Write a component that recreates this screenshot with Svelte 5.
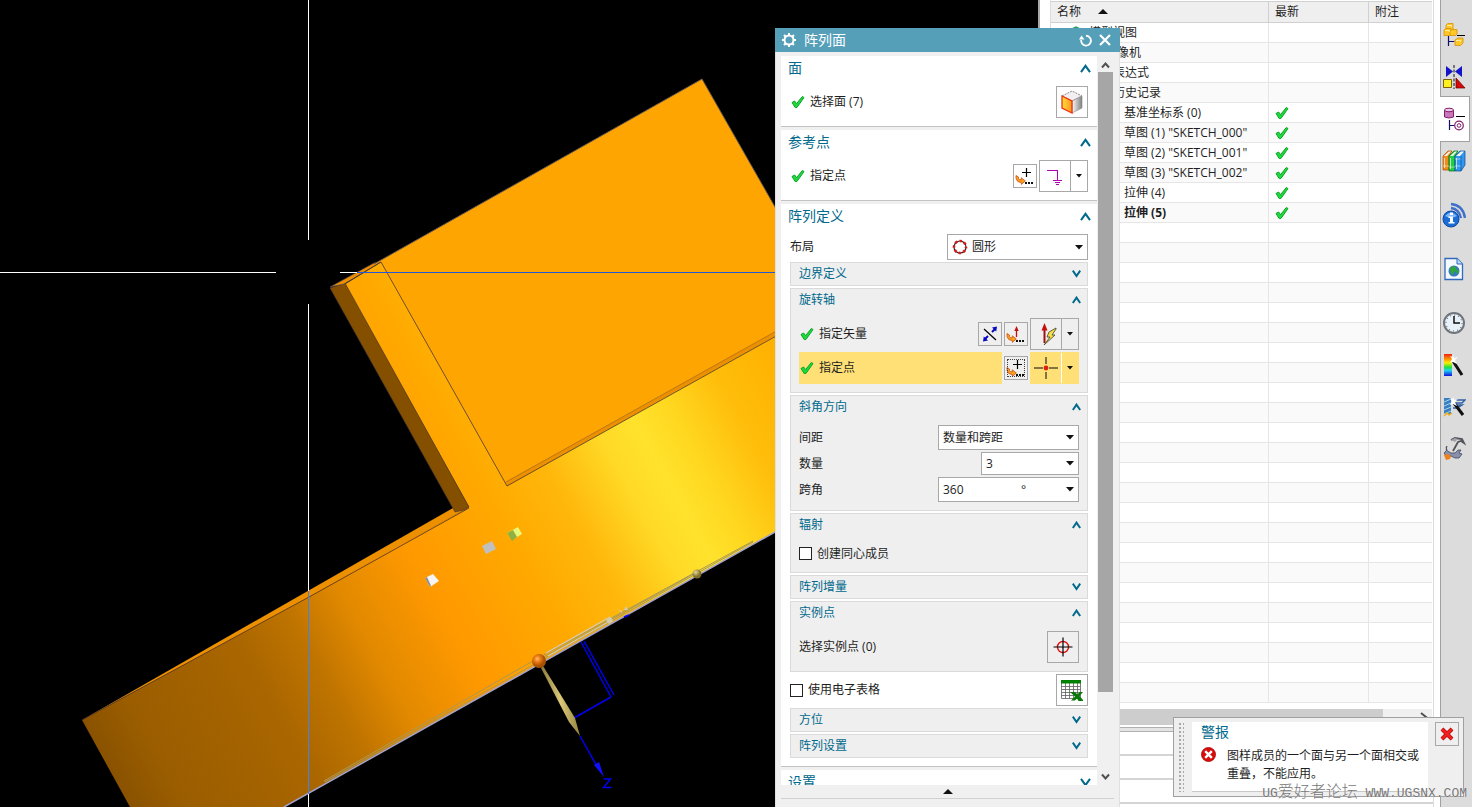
<script>
    const features = [
        { name: '模型视图', indent: 1, views: true },
        { name: '摄像机', indent: 2 },
        { name: '用户表达式', indent: 1 },
        { name: '模型历史记录', indent: 1 },
        { name: '基准坐标系 (0)', indent: 3, ok: true },
        { name: '草图 (1) "SKETCH_000"', indent: 3, ok: true },
        { name: '草图 (2) "SKETCH_001"', indent: 3, ok: true },
        { name: '草图 (3) "SKETCH_002"', indent: 3, ok: true },
        { name: '拉伸 (4)', indent: 3, ok: true },
        { name: '拉伸 (5)', indent: 3, ok: true, active: true }
    ];
    const blankRows = Array.from({ length: 24 });

    let layout = $state('圆形');
    let spacing = $state('数量和跨距');
    let count = $state('3');
    let span = $state('360');
    let concentric = $state(false);
    let spreadsheet = $state(false);
    let alertOpen = $state(true);
</script>

{#snippet chevron(open)}
    <svg class="chevron" width="11" height="9" viewBox="0 0 11 9" fill="none" stroke="currentColor" stroke-width="2">
        <path d={open ? 'M1 8.2 5.5 1.8 10 8.2' : 'M1 .8 5.5 7.2 10 .8'} />
    </svg>
{/snippet}

{#snippet chevronSmall(open)}
    <svg class="chevron" width="9" height="8" viewBox="0 0 9 8" fill="none" stroke="currentColor" stroke-width="2">
        <path d={open ? 'M.8 7 4.5 1.6 8.2 7' : 'M.8 .6 4.5 6 8.2 .6'} />
    </svg>
{/snippet}

{#snippet tick()}
    <svg class="tick" width="14" height="14" viewBox="0 0 14 14">
        <path d="M1 7.5 3.6 6 5.6 8.6 11.4 1.4 13 2.6 6 12.4 4.2 12.6Z" fill="#1fd83e" stroke="#0da428" stroke-width="1" stroke-linejoin="round" />
    </svg>
{/snippet}

{#snippet caret()}
    <svg class="caret" width="8" height="5" viewBox="0 0 8 5"><path d="M0 0h8L4 4.5Z" fill="#111" /></svg>
{/snippet}

{#snippet caretSmall()}
    <svg width="6" height="4" viewBox="0 0 6 4"><path d="M0 0h6L3 3.5Z" fill="#111" /></svg>
{/snippet}

{#snippet swoosh()}
    <path d="M2 10.500 4.500 12v1.600q.8 1.400 2.800 1.200v-2l4 3.200-4 3.400v-1.800Q3 17.500 2 13.500Z" fill="#f9a11b" stroke="#c8501e" stroke-width=".8" />
    <path d="M11 17h2v2h-2zM14 17h2v2h-2zM17 17h2v2h-2z" fill="#111" />
{/snippet}

{#snippet pointDialog()}
    <svg width="22" height="22" viewBox="0 0 22 22">
        {@render swoosh()}
        <path d="M12.500 3v9M8 7.500h9" stroke="#000" stroke-width="1.200" />
    </svg>
{/snippet}

<div class="app">
    <main class="viewport">
        <svg viewBox="0 0 1039 807" preserveAspectRatio="xMinYMin slice" role="img" aria-label="三维模型">
            <defs>
                <linearGradient id="shade" gradientUnits="userSpaceOnUse" x1="82" y1="720" x2="782" y2="332">
                    <stop offset="0" stop-color="#8a5200" />
                    <stop offset=".06" stop-color="#9a5d00" />
                    <stop offset=".22" stop-color="#aa6600" />
                    <stop offset=".29" stop-color="#bf7400" />
                    <stop offset=".36" stop-color="#e28900" />
                    <stop offset=".46" stop-color="#ff9900" />
                    <stop offset=".58" stop-color="#ffa900" />
                    <stop offset=".66" stop-color="#ffb70b" />
                    <stop offset=".74" stop-color="#ffda26" />
                    <stop offset=".785" stop-color="#ffe22c" />
                    <stop offset=".83" stop-color="#ffd820" />
                    <stop offset=".9" stop-color="#ffbe0b" />
                    <stop offset="1" stop-color="#ffae00" />
                </linearGradient>
                <radialGradient id="ball" cx=".38" cy=".35">
                    <stop offset="0" stop-color="#ffc070" />
                    <stop offset=".4" stop-color="#f08018" />
                    <stop offset="1" stop-color="#a85000" />
                </radialGradient>
                <radialGradient id="ballSmall" cx=".35" cy=".3">
                    <stop offset="0" stop-color="#e8d890" />
                    <stop offset="1" stop-color="#80702c" />
                </radialGradient>
                <linearGradient id="needle">
                    <stop offset="0" stop-color="#8a7a3a" />
                    <stop offset=".5" stop-color="#dcc878" />
                    <stop offset="1" stop-color="#94843e" />
                </linearGradient>
            </defs>

            <!-- plate -->
            <path d="M82 720 469 507 345 284 381 262 600 260 900 256V462L284 807H130Z" fill="url(#shade)" />
            <path d="M82 720 453 508 469 507 309 597Z" fill="#ec9000" />
            <path d="M82 720 309 597 469 508" fill="none" stroke="#4a3030" stroke-width=".8" />
            <path d="M330 288 345 283 469 507 464 510 455 512Z" fill="#845000" stroke="#4a3838" stroke-width=".6" />
            <path d="M330 287 374 263 381 262 344 284Z" fill="#ec9000" stroke="#504050" stroke-width=".7" />
            <!-- raised block -->
            <path d="M374 264 702 79 900 426V262L505 482 381 262Z" fill="#ffa502" />
            <path d="M374 264 702 79 900 426" fill="none" stroke="#6a584c" />
            <path d="M505 482 900 262V266L507 486Z" fill="#ec9000" />
            <path d="M345 284 381 262 507 486 900 267" fill="none" stroke="#4a3636" stroke-width=".8" />
            <path d="M506 482 900 262" stroke="#a86c20" stroke-width=".7" />

            <!-- selected edge -->
            <path d="M284 807 900 462" stroke="#a2a2cc" stroke-width="1.500" />
            <path d="M324 781 538 658 753 541M325 782 540 661 753 542M540 659 697 572" stroke="#a89a58" stroke-width="1" fill="none" />
            <path d="M546 653 610 617M548 656 610 621" stroke="#d6ccb0" stroke-width="1.200" />
            <path d="M606 620l5-3 2 4-4 3ZM618 609l4 2 0 2ZM626 606l2 4-4 0Z" fill="#d0cdb4" />
            <path d="M624 617l5-2" stroke="#00f" stroke-width="1.500" />

            <!-- handles -->
            <path d="M425 578 433 574 439 581 430 587Z" fill="#f4f4f4" />
            <path d="M425 578 427 577 431 586 430 587Z" fill="#8c8c8c" />
            <path d="M482 546 492 541 496 549 486 554Z" fill="#c0c0c0" />
            <path d="M507 533 518 527 522 534 512 540Z" fill="#e8f878" />
            <path d="M507 533 513 530 517 537 512 541Z" fill="#90b040" />

            <!-- datum axes -->
            <g fill="none" stroke="#0000f0" stroke-width="1.500">
                <path d="M581 642 611 697M584 641 614 695M611 697 574 718M580 736 598 768" />
                <path d="M603.500 779h7l-7 8.500h8" />
            </g>
            <path d="M594 765 599 762 604 777Z" fill="#1010ff" />
            <path d="M541 668 543 666 575 718 580 736 569 722Z" fill="url(#needle)" />
            <circle cx="539" cy="661" r="7" fill="url(#ball)" />
            <circle cx="697" cy="574" r="4.500" fill="url(#ballSmall)" />

            <!-- crosshair -->
            <g shape-rendering="crispEdges">
                <path d="M308 0h1v240h-1zM308 304h1v503h-1zM0 272h276v1H0zM340 272h20v1h-20z" fill="#fff" />
                <path d="M308 591h1v203h-1z" fill="#3c84f4" />
                <path d="M357 272h543v1H357z" fill="#2058d8" />
            </g>
        </svg>
    </main>

    <section class="navigator">
        <div class="sheet">
            <table>
                <colgroup><col /><col class="col-state" /><col class="col-note" /></colgroup>
                <thead>
                    <tr>
                        <th>名称 <svg class="sort" width="10" height="5" viewBox="0 0 10 5"><path d="M5 0 10 5H0Z" fill="#111" /></svg></th>
                        <th>最新</th>
                        <th>附注</th>
                    </tr>
                </thead>
                <tbody>
                    {#each features as f}
                        <tr class:active={f.active}>
                            <td class="indent-{f.indent}">
                                {#if f.views}
                                    <svg class="views" width="14" height="14" viewBox="0 0 14 14" fill="none" stroke="#20a060" stroke-width="1.500"><path d="M1 4 7 1l6 3v6l-6 3-6-3ZM1 4l6 3 6-3M7 7v6" /></svg>
                                {/if}{f.name}
                            </td>
                            <td>{#if f.ok}{@render tick()}{/if}</td>
                            <td></td>
                        </tr>
                    {/each}
                    {#each blankRows as _}
                        <tr><td></td><td></td><td></td></tr>
                    {/each}
                </tbody>
            </table>
            <div class="hscroll">
                <div class="hthumb"></div>
                <svg width="8" height="10" viewBox="0 0 8 10" fill="none" stroke="#505050" stroke-width="2"><path d="M1 1 6 5 1 9" /></svg>
            </div>
        </div>
        <div class="splitter"></div>
        <div class="details"><div></div><div></div><div></div></div>
    </section>

    <nav class="rail">
        <div class="tabs">
            <button aria-label="装配导航器">
                <svg width="24" height="26" viewBox="0 0 24 26">
                    <path d="M6.500 14v10M6.500 19.500h6" stroke="#10106c" stroke-width="1.200" fill="none" />
                    <path d="M15 13.500h8" stroke="#000" />
                    <g fill="#ffc828" stroke="#d89000" stroke-width=".8">
                        <path d="M4 3 6 1.500h5V7L9.500 8.500H4Z" /><path d="M2 8 4 6.500h5V12L7.500 13.500H2Z" /><path d="M8 9 10 7.500h5V12L13.500 13.500H8Z" /><path d="M13 18 16 16h5v5L18.500 23.500H13Z" />
                    </g>
                    <path d="M5 3.500h4.500v1.500M3 8.500h4.500V10M14 18.500h4.500V20" stroke="#fff0a0" fill="none" />
                </svg>
            </button>
            <button aria-label="约束导航器">
                <svg width="24" height="26" viewBox="0 0 24 26">
                    <path d="M4 2v11l7-5.500ZM20 2v11l-7-5.500Z" fill="#1414c8" />
                    <path d="M12 1v24" stroke="#111" stroke-dasharray="3 1.500" />
                    <path d="M1.500 15.500h8v8h-8z" fill="#fff020" stroke="#806000" />
                    <path d="M14 14 23 24h-9Z" fill="#d80808" stroke="#600" stroke-width=".7" />
                </svg>
            </button>
            <button class="current" aria-label="部件导航器">
                <svg width="24" height="26" viewBox="0 0 24 26">
                    <path d="M1.500 4v7q4.500 2 9 0V4" fill="#c878b8" stroke="#80206c" />
                    <ellipse cx="6" cy="4" rx="4.500" ry="1.800" fill="#f0c8e8" stroke="#80206c" />
                    <path d="M13 10.500h9" stroke="#000" />
                    <path d="M6.500 14v10M6.500 19.500h5" stroke="#10106c" stroke-width="1.200" />
                    <circle cx="16" cy="19.500" r="4.300" fill="#fff" stroke="#80206c" stroke-width="1.200" />
                    <circle cx="16" cy="19.500" r="1.800" fill="none" stroke="#80206c" />
                </svg>
            </button>
            <button aria-label="重用库">
                <svg width="24" height="24" viewBox="0 0 24 24">
                    <path d="M1 7 6 2h4L7 7v14H1Z" fill="#f08c1c" stroke="#a05000" stroke-width=".7" />
                    <path d="M7 7 12 2h4l-3 5v15H7Z" fill="#20d040" stroke="#006820" stroke-width=".7" />
                    <path d="M13 7 18 2h5v14l-4 6h-6Z" fill="#3098f0" stroke="#104890" stroke-width=".7" />
                    <path d="M2 7 7 2.500h2L5 7M8 7l5-4.500h2L11 7M14 7l5-4.500h3L18 7" fill="#f4f4e8" />
                    <path d="M2.500 9v10M8.500 9v11M14.500 9v11" stroke="#ffffffa0" /><path d="M1 17h6M7 18h6M13 10h6M13 17h6" stroke="#ffffff80" />
                    <path d="M19 7v15" stroke="#104890" stroke-width=".7" />
                </svg>
            </button>
        </div>
        <div class="tabs loose">
            <button aria-label="HD3D 工具">
                <svg width="24" height="26" viewBox="0 0 24 26">
                    <g fill="none" stroke="#4070c8" stroke-width="2.400"><path d="M9 2q12 1 14 14" /><path d="M9 6q8 1 10 10" /><path d="M9 10q4 0 6 5" /></g>
                    <circle cx="9" cy="17" r="8" fill="#1c6cd8" stroke="#1048a0" /><path d="M3 14q6-7 12 0-6 3-12 0Z" fill="#80b8f8" />
                    <path d="M8 10.500h3v2.500H8zM6.500 14.500H11V20h1.500v1.500h-6V20H8v-4H6.500Z" fill="#fff" />
                </svg>
            </button>
            <button aria-label="Web 浏览器">
                <svg width="22" height="24" viewBox="0 0 22 24">
                    <path d="M2 1.500h12L19.500 7v15.500H2Z" fill="#f4f9ff" stroke="#3468b8" stroke-width="1.300" />
                    <path d="M14 1.500V7h5.500" fill="#b8d8ff" stroke="#3468b8" />
                    <circle cx="11" cy="14" r="5.500" fill="#3878c0" /><path d="M8 10q4-2 5 1t-2 4l-1 3q-3-2-3-5ZM14 12l2 2-1 3-2-2Z" fill="#30a838" />
                </svg>
            </button>
            <button aria-label="历史记录">
                <svg width="24" height="24" viewBox="0 0 24 24">
                    <circle cx="12" cy="12" r="10" fill="#e8f0f8" stroke="#70757c" stroke-width="2" />
                    <circle cx="12" cy="12" r="8" fill="none" stroke="#384858" stroke-dasharray="1 3.189" />
                    <path d="M12 5v7h6" stroke="#111" stroke-width="1.500" fill="none" />
                </svg>
            </button>
        </div>
        <div class="tabs">
            <button aria-label="系统材料">
                <svg width="24" height="24" viewBox="0 0 24 24">
                    <defs><linearGradient id="hue" x2="0" y2="1"><stop offset="0" stop-color="#f02010" /><stop offset=".25" stop-color="#ffa000" /><stop offset=".4" stop-color="#f8f000" /><stop offset=".6" stop-color="#20e040" /><stop offset=".75" stop-color="#20d0f0" /><stop offset="1" stop-color="#1010e0" /></linearGradient></defs>
                    <path d="M2 1h8v22H2z" fill="url(#hue)" />
                    <path d="M11 8 20 22" stroke="#111" stroke-width="3" /><path d="m11 1 1 4 4-1-3 3 2 4-4-2-3 1 2-4-2-3 3 1Z" fill="#fff" />
                </svg>
            </button>
            <button aria-label="加工向导">
                <svg width="24" height="24" viewBox="0 0 24 24">
                    <path d="M2 3h7v16H2z" fill="#3880c0" /><path d="m2 7 7-3M2 11l7-3M2 15l7-3M2 19l7-3" stroke="#a8d0f0" />
                    <path d="M14 5h9l-3 3h-6M12 10h8l-5 3h-4" fill="none" stroke="#3060a8" stroke-width="1.500" />
                    <path d="m2 21 3-3 2 2 3-2" stroke="#f0b020" stroke-width="1.500" fill="none" />
                    <path d="m12 8 9 12" stroke="#111" stroke-width="3" /><path d="m11 1 1 4 4-1-3 3 2 4-4-2-3 1 2-4-2-3 3 1Z" fill="#fff" />
                </svg>
            </button>
            <button aria-label="角色">
                <svg width="24" height="24" viewBox="0 0 24 24">
                    <path d="m9 3 4-2 7 1 2 4-3-2-3 1-5 9" stroke="#505458" stroke-width="1.800" fill="none" />
                    <path d="M9 3 13 1l3 1-3 3Z" fill="#a0a4a8" />
                    <path d="M5 9 4 13l5 3 4 0 3-3 3 0-2 3 3 1-3 4-4 0-4-2-5 0-2-3 3-3-1-3Z" fill="#8890ac" stroke="#404860" stroke-width=".8" />
                    <path d="m2 18 4-1 3 2-1 3-4 1Z" fill="#f08018" />
                </svg>
            </button>
        </div>
    </nav>

    <section class="dialog" role="dialog" aria-label="阵列面">
        <header class="titlebar">
            <svg width="16" height="16" viewBox="0 0 16 16" fill="none" stroke="#fff">
                <circle cx="8" cy="8" r="4.500" stroke-width="2" />
                <path d="M8 1v2.500M8 12.500V15M1 8h2.500M12.500 8H15M3 3l1.800 1.800M11.200 11.200 13 13M13 3l-1.800 1.800M4.800 11.200 3 13" stroke-width="2" />
            </svg>
            <h1>阵列面</h1>
            <button aria-label="重置">
                <svg width="13" height="13" viewBox="0 0 13 13"><path d="M7 1.800A4.900 4.900 0 1 1 2.200 6" fill="none" stroke="#fff" stroke-width="1.900" /><path d="M0 5.500 2.500 1.500 5.500 5.500Z" fill="#fff" /></svg>
            </button>
            <button aria-label="关闭">
                <svg width="12" height="12" viewBox="0 0 12 12" stroke="#fff" stroke-width="2.200"><path d="m1 1 10 10M11 1 1 11" /></svg>
            </button>
        </header>

        <div class="body">
            <div class="cards">
                <section class="card">
                    <button class="head">面 {@render chevron(true)}</button>
                    <div class="row">
                        {@render tick()}<span class="label">选择面 (7)</span>
                        <button class="tool large" aria-label="面">
                            <svg width="24" height="26" viewBox="0 0 24 26">
                                <defs>
                                    <linearGradient id="cubeL"><stop offset="0" stop-color="#ffe038" /><stop offset="1" stop-color="#ff9420" /></linearGradient>
                                    <linearGradient id="cubeR"><stop offset="0" stop-color="#fafafa" /><stop offset="1" stop-color="#808080" /></linearGradient>
                                </defs>
                                <path d="M2 7 12 2l10 5-10 5Z" fill="#f2eef2" stroke="#888" stroke-dasharray="2 1" />
                                <path d="m12 12 10-5v12l-10 5Z" fill="url(#cubeR)" stroke="#888" stroke-width=".6" />
                                <path d="m2 7 10 5v12L2 19Z" fill="url(#cubeL)" stroke="#f03010" stroke-width="1.300" />
                            </svg>
                        </button>
                    </div>
                </section>

                <section class="card">
                    <button class="head">参考点 {@render chevron(true)}</button>
                    <div class="row">
                        {@render tick()}<span class="label">指定点</span>
                        <button class="tool" aria-label="点对话框">{@render pointDialog()}</button>
                        <div class="split">
                            <button aria-label="推断点">
                                <svg width="24" height="24" viewBox="0 0 24 24" fill="none" stroke="#b400b4" stroke-width="1" shape-rendering="crispEdges">
                                    <path d="M4 6.500h10.500V16M10 16.500h9M12 18.500h5M13 20.500h3" />
                                </svg>
                            </button>
                            <button class="more" aria-label="更多点类型">{@render caretSmall()}</button>
                        </div>
                    </div>
                </section>

                <section class="card">
                    <button class="head">阵列定义 {@render chevron(true)}</button>
                    <div class="stack">
                        <div class="field">
                            <label for="layout">布局</label>
                            <div class="combo wide high">
                                <svg class="lead" width="16" height="16" viewBox="0 0 16 16">
                                    <circle cx="8" cy="8" r="6" fill="none" stroke="#282828" stroke-width="1.200" />
                                    <circle cx="8" cy="8" r="6" fill="none" stroke="#e01818" stroke-width="2.600" stroke-dasharray="2.400 2.312" stroke-dashoffset="1.200" />
                                </svg>
                                <select id="layout" bind:value={layout}><option>圆形</option><option>线性</option></select>
                                {@render caret()}
                            </div>
                        </div>

                        <section class="group"><button class="subhead">边界定义 {@render chevronSmall(false)}</button></section>

                        <section class="group">
                            <button class="subhead">旋转轴 {@render chevronSmall(true)}</button>
                            <div class="content">
                                <div class="row">
                                    {@render tick()}<span class="label">指定矢量</span>
                                    <button class="tool" aria-label="反向">
                                        <svg width="18" height="18" viewBox="0 0 18 18">
                                            <path d="m3 4 12 11" stroke="#000" stroke-width="1.200" />
                                            <path d="M4 14 7 11M11 7l3-3" stroke="#0808c0" stroke-width="2" />
                                            <path d="m11 2.500 5-1-.8 5ZM7 15.500l-5 1 .8-5Z" fill="#0808c0" />
                                        </svg>
                                    </button>
                                    <button class="tool" aria-label="矢量对话框">
                                        <svg width="22" height="22" viewBox="0 0 22 22">
                                            {@render swoosh()}
                                            <path d="M11.500 14V7" stroke="#c01010" stroke-width="1.300" /><path d="m11.500 3 2.200 5H9.300Z" fill="#c01010" />
                                        </svg>
                                    </button>
                                    <div class="split">
                                        <button aria-label="自动判断矢量">
                                            <svg width="24" height="24" viewBox="0 0 24 24">
                                                <path d="M10.500 21V7" stroke="#a01010" stroke-width="2" /><path d="m10.500 1 3 7.500h-6Z" fill="#c80c0c" />
                                                <path d="m22 6-7 4-2 5h3l-6 8 11-10h-3l4-6Z" fill="#f8e048" stroke="#50502c" stroke-width=".9" />
                                            </svg>
                                        </button>
                                        <button class="more" aria-label="更多矢量类型">{@render caretSmall()}</button>
                                    </div>
                                </div>
                                <div class="row">
                                    <div class="prompt">{@render tick()}<span class="label">指定点</span></div>
                                    <button class="tool focus" aria-label="点对话框">{@render pointDialog()}</button>
                                    <div class="split lit">
                                        <button aria-label="光标位置">
                                            <svg width="26" height="26" viewBox="0 0 26 26">
                                                <path d="M13 2v7M13 17v7M1 13h9M16 13h9" stroke="#58502c" stroke-width="1.500" />
                                                <circle cx="13" cy="13" r="2.400" fill="#e02010" />
                                            </svg>
                                        </button>
                                        <button class="more" aria-label="更多点类型">{@render caretSmall()}</button>
                                    </div>
                                </div>
                            </div>
                        </section>

                        <section class="group">
                            <button class="subhead">斜角方向 {@render chevronSmall(true)}</button>
                            <div class="content">
                                <div class="field">
                                    <label for="spacing">间距</label>
                                    <div class="combo wide">
                                        <select id="spacing" bind:value={spacing}><option>数量和跨距</option><option>数量和间隔</option></select>
                                        {@render caret()}
                                    </div>
                                </div>
                                <div class="field">
                                    <label for="count">数量</label>
                                    <div class="combo narrow"><input id="count" bind:value={count} />{@render caret()}</div>
                                </div>
                                <div class="field">
                                    <label for="span">跨角</label>
                                    <div class="combo wide"><input id="span" bind:value={span} /><span class="unit">°</span>{@render caret()}</div>
                                </div>
                            </div>
                        </section>

                        <section class="group">
                            <button class="subhead">辐射 {@render chevronSmall(true)}</button>
                            <div class="content"><label class="check"><input type="checkbox" bind:checked={concentric} />创建同心成员</label></div>
                        </section>

                        <section class="group"><button class="subhead">阵列增量 {@render chevronSmall(false)}</button></section>

                        <section class="group">
                            <button class="subhead">实例点 {@render chevronSmall(true)}</button>
                            <div class="content">
                                <div class="row plain">
                                    <span class="label">选择实例点 (0)</span>
                                    <button class="tool large" aria-label="选择实例点">
                                        <svg width="20" height="20" viewBox="0 0 20 20" fill="none">
                                            <circle cx="10" cy="10" r="5.500" stroke="#e01010" stroke-width="1.400" /><path d="M10 .5v19M.5 10h19" stroke="#000" stroke-width="1.200" />
                                        </svg>
                                    </button>
                                </div>
                            </div>
                        </section>

                        <div class="row plain">
                            <label class="check"><input type="checkbox" bind:checked={spreadsheet} />使用电子表格</label>
                            <button class="tool large" aria-label="电子表格">
                                <svg width="24" height="24" viewBox="0 0 24 24">
                                    <path d="M1.500 5v15.500h19V5M1.500 8.500h19M1.500 11.500h19M1.500 14.500h19M1.500 17.500h19M5.500 5v15.500M9.500 5v15.500M13.500 5v15.500M17.500 5v15.500" fill="none" stroke="#606060" stroke-width=".8" />
                                    <path d="M1 2h20v3.500H1z" fill="#008000" />
                                    <path d="M10 14h5l2.500 2.500 2-2.500H23l-3.500 4 3.500 4v1h-4.500L17 20.500 15 22.500h-4l4-4Z" fill="#087808" />
                                </svg>
                            </button>
                        </div>

                        <section class="group"><button class="subhead">方位 {@render chevronSmall(false)}</button></section>
                        <section class="group"><button class="subhead">阵列设置 {@render chevronSmall(false)}</button></section>
                    </div>
                </section>

                <section class="card">
                    <button class="head">设置 {@render chevron(false)}</button>
                </section>
            </div>
            <div class="vscroll">
                <svg width="9" height="16" viewBox="0 0 9 16" fill="none" stroke="#505050" stroke-width="2"><path d="m1 11.500 3.500-4 3.500 4" /></svg>
                <div class="track"><div class="vthumb"></div></div>
                <svg width="9" height="16" viewBox="0 0 9 16" fill="none" stroke="#505050" stroke-width="2"><path d="m1 5.500 3.500 4 3.500-4" /></svg>
            </div>
        </div>
        <footer><button aria-label="收起"><svg width="10" height="5" viewBox="0 0 10 5"><path d="M5 0 10 5H0Z" fill="#111" /></svg></button></footer>
    </section>

    {#if alertOpen}
        <aside class="alert" role="alert">
            <div class="grip"></div>
            <div class="message">
                <h2>警报</h2>
                <div class="reason">
                    <svg width="15" height="15" viewBox="0 0 15 15"><circle cx="7.500" cy="7.500" r="7" fill="#d80c0c" stroke="#a00" stroke-width=".8" /><path d="m4.200 4.200 6.600 6.600M10.800 4.200l-6.600 6.600" stroke="#fff" stroke-width="2.400" /></svg>
                    <p>图样成员的一个面与另一个面相交或重叠，不能应用。</p>
                </div>
            </div>
            <button class="tool" aria-label="关闭警报" onclick={() => (alertOpen = false)}>
                <svg width="14" height="14" viewBox="0 0 14 14"><path d="m2 2 10 10M12 2 2 12" stroke="#b00c0c" stroke-width="4" /><path d="m2 2 10 10M12 2 2 12" stroke="#f02020" stroke-width="2.600" /></svg>
            </button>
        </aside>
    {/if}

    <div class="watermark">UG<span>爱好者论坛</span> WWW.UGSNX.COM</div>
</div>

<style>
    :global(body) {
        margin: 0;
    }

    .app {
        position: relative;
        display: flex;
        height: 100vh;
        overflow: hidden;
        background: #fff;
        color: #1e1e1e;
        font: 12px/18px "Open Sans", "Noto Sans CJK SC", sans-serif;
    }

    .app * {
        box-sizing: border-box;
    }

    svg {
        display: block;
        flex: none;
    }

    button {
        display: flex;
        align-items: center;
        justify-content: center;
        padding: 0;
        border: 0;
        background: none;
        color: inherit;
        font: inherit;
    }

    h1, h2, p {
        margin: 0;
        font-weight: 400;
    }

    .viewport {
        flex: 1;
        min-width: 0;
        background: #000;
    }

    .viewport svg {
        width: 100%;
        height: 100%;
    }

    /* part navigator */
    .navigator {
        display: flex;
        flex-direction: column;
        width: 402px;
        border-left: 2px solid #a8a8a8;
        background: #fff;
    }

    .sheet {
        flex: none;
        height: 727px;
        margin: 0 6px 0 10px;
        padding: 1px 1px 0 0;
        border-left: 1px solid #dcdcdc;
        border-right: 1px solid #dcdcdc;
    }

    table {
        width: 100%;
        table-layout: fixed;
        border-collapse: separate;
        border-spacing: 0;
    }

    .col-state {
        width: 100px;
    }

    .col-note {
        width: 63px;
    }

    th {
        height: 22px;
        padding: 0 6px;
        border-top: 1px solid #d0d0d0;
        border-bottom: 1px solid #d0d0d0;
        border-right: 1px solid #d0d0d0;
        background: #efefef;
        font-weight: 400;
        text-align: left;
    }

    .sort {
        display: inline-block;
        margin-left: 14px;
        vertical-align: 2px;
    }

    td {
        height: 20px;
        padding: 0 6px;
        border-right: 1px solid #e6e6e6;
        border-bottom: 1px solid #e6e6e6;
        line-height: 18px;
        white-space: nowrap;
    }

    th:last-child, td:last-child {
        border-right: 0;
    }

    tbody tr:nth-child(even) {
        background: #fafafa;
    }

    .indent-1 {
        padding-left: 38px;
    }

    .indent-2 {
        padding-left: 54px;
    }

    .indent-3 {
        padding-left: 73px;
    }

    .views {
        display: inline-block;
        margin: 0 6px 0 -20px;
        vertical-align: -3px;
    }

    .active td {
        font-weight: 700;
    }

    .hscroll {
        display: flex;
        align-items: center;
        justify-content: space-between;
        height: 16px;
        margin-top: 6px;
        padding-right: 4px;
        background: #f0f0f0;
    }

    .hthumb {
        width: 88%;
        height: 100%;
        background: #cdcdcd;
    }

    .splitter {
        flex: none;
        height: 5px;
        border: solid #b0b0b0;
        border-width: 1px 0;
        background: #e4e4e4;
    }

    .details {
        flex: 1;
        margin-right: 6px;
        border-right: 1px solid #dcdcdc;
    }

    .details div {
        height: 24px;
        border-bottom: 2px solid #d4d4d4;
    }

    /* resource bar */
    .rail {
        width: 32px;
        padding-top: 14px;
        border-left: 1px solid #a0a0a0;
        background: #dcdcdc;
    }

    .tabs {
        display: flex;
        flex-direction: column;
    }

    .tabs.loose {
        gap: 12px;
        padding-top: 12px;
    }

    .tabs button {
        width: 26px;
        height: 42px;
    }

    .tabs .current {
        width: 30px;
        height: 46px;
        margin: -2px 0 -2px -1px;
        border: 1px solid #a0a0a0;
        border-left: 0;
        background: #fff;
    }

    /* dialog */
    .dialog {
        position: absolute;
        top: 28px;
        right: 352px;
        bottom: 0;
        display: flex;
        flex-direction: column;
        width: 345px;
        border: solid #e0e0e0;
        border-width: 0 1px;
        background: #f0f0f0;
    }

    .titlebar {
        display: flex;
        flex: none;
        align-items: center;
        gap: 7px;
        height: 24px;
        margin: 0 -1px;
        padding: 0 9px 0 6px;
        background: #569fb9;
        color: #fff;
    }

    .titlebar h1 {
        flex: 1;
        font-size: 14px;
    }

    .body {
        display: flex;
        flex: 1;
        gap: 1px;
        min-height: 0;
        padding: 4px 6px 0 5px;
    }

    .cards {
        display: flex;
        flex: 1;
        flex-direction: column;
        gap: 3px;
        overflow: hidden;
    }

    .card {
        flex: none;
        padding-bottom: 8px;
        border-bottom: 1px solid #c4c4c4;
        background: #fff;
    }

    .head, .subhead {
        justify-content: space-between;
        width: 100%;
        color: #00698c;
    }

    .head {
        height: 24px;
        margin-bottom: 6px;
        padding: 0 6px 0 7px;
        font-size: 14px;
    }

    .subhead {
        height: 22px;
        padding: 0 6px 0 8px;
    }

    .row {
        display: flex;
        align-items: center;
        gap: 2px;
        height: 32px;
    }

    .card > .row {
        padding: 0 9px 0 10px;
    }

    .label {
        flex: 1;
        padding-left: 3px;
    }

    .plain .label {
        padding-left: 0;
    }

    .stack {
        display: flex;
        flex-direction: column;
        gap: 2px;
        padding: 0 9px;
    }

    .group {
        border: 1px solid #dadada;
        background: #efefef;
    }

    .content {
        display: flex;
        flex-direction: column;
        gap: 2px;
        padding: 7px 8px 8px;
    }

    .content > .row > .tick {
        margin-left: 1px;
    }

    .prompt {
        display: flex;
        flex: 1;
        align-items: center;
        gap: 2px;
        height: 32px;
        padding-left: 1px;
        background: #ffe077;
    }

    .tool {
        flex: none;
        width: 24px;
        height: 24px;
        border: 1px solid #a8a8a8;
        overflow: hidden;
    }

    .large {
        width: 32px;
        height: 32px;
    }

    .focus {
        outline: 1px dotted #404040;
        outline-offset: -4px;
    }

    .split {
        display: flex;
        width: 49px;
        height: 32px;
        border: 1px solid #a8a8a8;
    }

    .split button {
        flex: 1;
    }

    .split .more {
        flex: none;
        width: 17px;
        border-left: 1px solid #a8a8a8;
    }

    .lit {
        border-color: #ffe077;
        background: #ffe077;
    }

    .lit .more {
        border-color: #fff;
    }

    .field {
        display: flex;
        align-items: center;
        justify-content: space-between;
    }

    .combo {
        display: flex;
        align-items: center;
        height: 25px;
        padding: 0 4px;
        border: 1px solid #a8a8a8;
        background: #fff;
    }

    .wide {
        width: 141px;
    }

    .high {
        height: 26px;
    }

    .narrow {
        width: 98px;
        height: 23px;
    }

    .lead {
        margin-right: 4px;
    }

    select, .combo input {
        flex: 1;
        min-width: 0;
        padding: 0;
        border: 0;
        outline: 0;
        appearance: none;
        background: none;
        color: inherit;
        font: inherit;
    }

    .unit {
        width: 45px;
    }

    .check {
        display: flex;
        flex: 1 1 auto;
        align-items: center;
        gap: 5px;
        height: 21px;
    }

    .check input {
        width: 13px;
        height: 13px;
        margin: 0;
        border: 1px solid #222;
        appearance: none;
        background: #fff;
    }

    .check input:checked {
        background: #00698c;
    }

    .vscroll {
        display: flex;
        flex-direction: column;
        align-items: center;
        width: 15px;
    }

    .track {
        flex: 1;
        width: 100%;
    }

    .vthumb {
        height: 89%;
        background: #a6a6a6;
    }

    footer {
        flex: none;
        height: 22px;
        margin: 0 5px;
    }

    footer button {
        width: 100%;
        height: 14px;
        border-bottom: 1px solid #d0d0d0;
    }

    /* alert */
    .alert {
        position: absolute;
        right: 8px;
        bottom: 10px;
        display: flex;
        width: 291px;
        height: 80px;
        padding: 4px;
        border: 1px solid #a0a0a0;
        background: #efefef;
    }

    .grip {
        width: 6px;
        margin-right: 8px;
        background: radial-gradient(circle, #a8a8a8 1px, transparent 1px) 0 0 / 4px 4px;
    }

    .message {
        flex: 1;
        margin-right: 7px;
        padding: 0 8px 0 9px;
        border-bottom: 1px solid #c8c8c8;
        background: #fff;
    }

    .message h2 {
        color: #00698c;
        font-size: 14px;
        line-height: 20px;
    }

    .reason {
        display: flex;
        gap: 11px;
        margin-top: 5px;
    }

    .reason p {
        line-height: 18px;
    }

    .watermark {
        position: absolute;
        right: 5px;
        bottom: 3px;
        color: #777;
        font: 13px/20px "Liberation Mono", "Noto Sans CJK SC", monospace;
        text-shadow: 0 0 1px #fff;
    }

    .watermark span {
        font-size: 16px;
        font-weight: 300;
    }
</style>
